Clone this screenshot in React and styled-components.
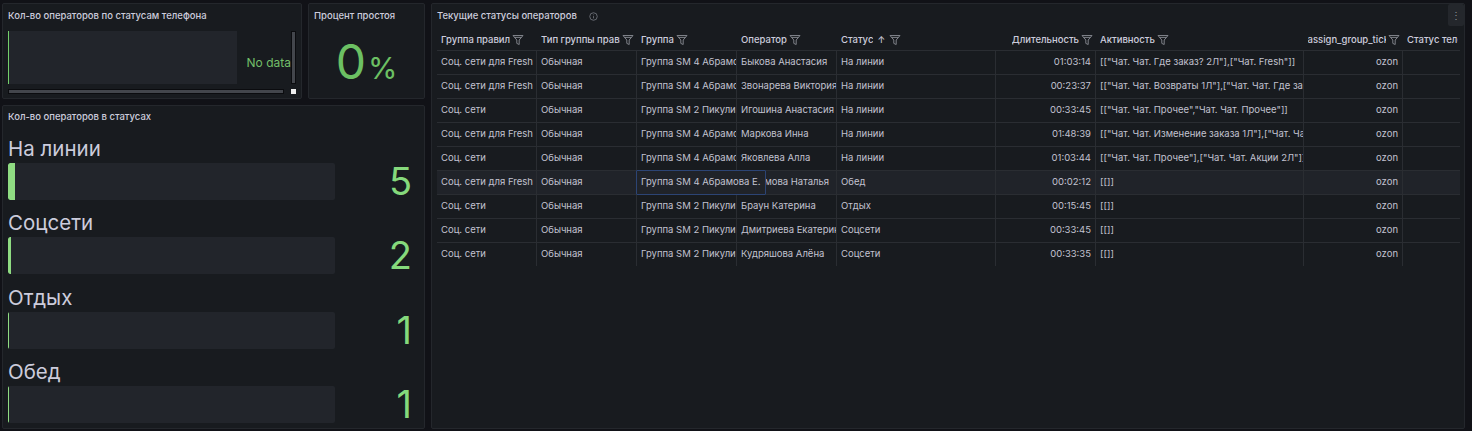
import styled, { createGlobalStyle } from 'styled-components'

const GlobalStyle = createGlobalStyle`
  html, body {
    margin: 0;
    height: 100%;
    background: #111217;
  }
  body {
    font-family: Inter, "Noto Sans", sans-serif;
    overflow: hidden;
  }
  * { box-sizing: border-box; }
`

const Page = styled.div`
  width: 1472px;
  height: 431px;
  padding: 3px 7px 2px 2px;
  display: flex;
  gap: 6px;
`

const LeftColumn = styled.div`
  width: 423px;
  display: flex;
  flex-direction: column;
  gap: 6px;
`

const TopRow = styled.div`
  height: 96px;
  display: flex;
  gap: 6px;
`

const Panel = styled.section`
  position: relative;
  flex: ${p => p.$flex || '1'};
  min-width: 0;
  min-height: 0;
  background: #181b1f;
  border: 1px solid #24272c;
  border-radius: 2px;
  overflow: hidden;
`

const Title = styled.h2`
  margin: 0;
  padding: ${p => p.$top || 6}px 5px 0;
  height: 24px;
  font-size: 9.5px;
  line-height: 12px;
  font-weight: 500;
  color: #ccccdc;
  white-space: nowrap;
`

const StatusBody = styled.div`
  display: grid;
  grid-template-columns: 276px 7px 5px;
  grid-template-rows: 53px 5px 5px;
  padding: 3px 0 0 5px;
`

const NoDataArea = styled.div`
  grid-column: 1 / 3;
  display: flex;
  align-items: center;
  justify-content: flex-end;
  padding: 9px 0 0 0;
  background: linear-gradient(to right, #73d06a 0, #73d06a 1px, #22252b 1px, #22252b 229px, #181b1f 229px);
  color: #73bf69;
  font-size: 12px;
`

const ScrollV = styled.div`
  grid-column: 3;
  grid-row: 1;
  width: 5px;
  background: #43464c;
  border: 1px solid #0b0c0f;
`

const ScrollH = styled.div`
  grid-column: 1;
  grid-row: 3;
  height: 5px;
  background: #43464c;
  border: 1px solid #0b0c0f;
`

const ScrollCorner = styled.div`
  grid-column: 3;
  grid-row: 3;
  background: #eeeeee;
`

const StatValue = styled.div`
  display: flex;
  align-items: baseline;
  justify-content: center;
  margin-top: 5px;
  color: #6cc063;
  font-size: 48px;
  line-height: 58px;
  font-weight: 400;
`

const StatUnit = styled.span`
  font-size: 30px;
  margin-left: 2px;
`

const GaugeList = styled.div`
  display: flex;
  flex-direction: column;
  padding: 5.5px 12px 0 5px;
`

const GaugeItem = styled.div`
  height: 74.5px;
`

const GaugeLabel = styled.div`
  height: 27px;
  font-size: 20.5px;
  line-height: 25px;
  color: #ccccdc;
`

const GaugeRow = styled.div`
  display: flex;
  align-items: center;
  justify-content: space-between;
  height: 37px;
`

const GaugeTrack = styled.div`
  width: 327px;
  height: 100%;
  background: #22252b;
  border-radius: 2px;
  overflow: hidden;
`

const GaugeFill = styled.div`
  height: 100%;
  background: #8fdc82;
  border-radius: 2px 0 0 2px;
`

const GaugeValue = styled.div`
  font-size: 38px;
  line-height: 37px;
  color: #85d97c;
`

const InfoIcon = styled.svg`
  position: absolute;
  top: 8px;
  left: 157px;
  width: 9px;
  height: 9px;
  color: #7e818a;
`

const MenuButton = styled.button`
  position: absolute;
  top: 0;
  right: 0;
  width: 16px;
  height: 22px;
  padding: 0;
  border: 0;
  border-radius: 2px;
  background: #24272c;
  color: #8e9099;
  font: 10px/20px Inter, sans-serif;
`

const Table = styled.div`
  position: relative;
  margin: 3px 4px 0 5px;
  height: 235px;
  overflow: hidden;
  font-size: 9.5px;
`

const HeadRow = styled.div`
  display: flex;
  height: 20px;
  padding-bottom: 2px;
  border-bottom: 1px solid #2a2d32;
`

const HeadCell = styled.div`
  flex: 0 0 ${p => p.$w}px;
  display: flex;
  align-items: center;
  justify-content: ${p => (p.$right ? 'flex-end' : 'flex-start')};
  padding: 0 3px 0 4px;
  overflow: hidden;
  font-weight: 500;
  color: #ccccdc;
  white-space: nowrap;
`

const HeadText = styled.span`
  overflow: hidden;
  flex: 0 1 auto;
`

const SortArrow = styled.span`
  flex: none;
  margin: 0 2px 0 4px;
  font-size: 9px;
  color: #ccccdc;
`

const FilterIcon = styled.svg`
  flex: none;
  width: 12px;
  height: 12px;
  margin-left: 2px;
  color: #7e8188;
`

const Row = styled.div`
  display: flex;
  height: 24px;
  border-bottom: ${p => (p.$end ? '0' : '1px solid #2a2d32')};
  background: ${p => (p.$hovered ? '#202329' : 'transparent')};
`

const Cell = styled.div`
  flex: 0 0 ${p => p.$w}px;
  padding: 0 ${p => (p.$right ? '4px' : '0')} 0 4px;
  line-height: 21px;
  color: #c2c2d0;
  text-align: ${p => (p.$right ? 'right' : 'left')};
  white-space: nowrap;
  overflow: hidden;
  border-right: ${p => (p.$last ? '0' : '1px solid #2a2d32')};
`

const HoverCell = styled.div`
  position: absolute;
  top: 139px;
  left: 199px;
  height: 25px;
  padding: 0 0 0 4px;
  width: 130px;
  line-height: 21px;
  color: #c2c2d0;
  white-space: nowrap;
  background: #202329;
  border: 1px solid #2c4474;
  border-radius: 1px;
`

const columns = [
  { name: 'Группа правил', w: 100 },
  { name: 'Тип группы правил', w: 100 },
  { name: 'Группа', w: 100 },
  { name: 'Оператор', w: 100 },
  { name: 'Статус', w: 159, sort: true },
  { name: 'Длительность', w: 100, right: true },
  { name: 'Активность', w: 207.5 },
  { name: 'assign_group_ticket', w: 99.5, right: true },
  { name: 'Статус телефона', w: 58, nofilter: true },
]

const SM4 = 'Группа SM 4 Абрамова Е.'
const SM2 = 'Группа SM 2 Пикулина А.'

const rows = [
  ['Соц. сети для Fresh', SM4, 'Быкова Анастасия', 'На линии', '01:03:14', '[["Чат. Чат. Где заказ? 2Л"],["Чат. Fresh"]]'],
  ['Соц. сети для Fresh', SM4, 'Звонарева Виктория', 'На линии', '00:23:37', '[["Чат. Чат. Возвраты 1Л"],["Чат. Чат. Где заказ? 2Л"]]'],
  ['Соц. сети', SM2, 'Игошина Анастасия', 'На линии', '00:33:45', '[["Чат. Чат. Прочее","Чат. Чат. Прочее"]]'],
  ['Соц. сети для Fresh', SM4, 'Маркова Инна', 'На линии', '01:48:39', '[["Чат. Чат. Изменение заказа 1Л"],["Чат. Чат. Прочее"]]'],
  ['Соц. сети', SM4, 'Яковлева Алла', 'На линии', '01:03:44', '[["Чат. Чат. Прочее"],["Чат. Чат. Акции 2Л"]]'],
  ['Соц. сети для Fresh', SM4, 'Абрамова Наталья', 'Обед', '00:02:12', '[[]]'],
  ['Соц. сети', SM2, 'Браун Катерина', 'Отдых', '00:15:45', '[[]]'],
  ['Соц. сети', SM2, 'Дмитриева Екатерина', 'Соцсети', '00:33:45', '[[]]'],
  ['Соц. сети', SM2, 'Кудряшова Алёна', 'Соцсети', '00:33:35', '[[]]'],
]

const gauges = [
  { label: 'На линии', value: 5, fill: 7 },
  { label: 'Соцсети', value: 2, fill: 3 },
  { label: 'Отдых', value: 1, fill: 1 },
  { label: 'Обед', value: 1, fill: 1 },
]

const Filter = () => (
  <FilterIcon viewBox="0 0 12 12" fill="none" stroke="currentColor" strokeWidth="1">
    <path d="M1 1.5h10L7.2 6v4.5L4.8 9.4V6z" />
    <path d="M2.4 3.4h7.2" />
  </FilterIcon>
)

const Gauge = ({ label, value, fill }) => (
  <GaugeItem>
    <GaugeLabel>{label}</GaugeLabel>
    <GaugeRow>
      <GaugeTrack>
        <GaugeFill style={{ width: fill }} />
      </GaugeTrack>
      <GaugeValue>{value}</GaugeValue>
    </GaugeRow>
  </GaugeItem>
)

const App = () => {
  return (
    <Page>
      <GlobalStyle />
      <LeftColumn>
        <TopRow>
          <Panel $flex="0 0 300px">
            <Title>Кол-во операторов по статусам телефона</Title>
            <StatusBody>
              <NoDataArea>No data</NoDataArea>
              <ScrollV />
              <ScrollH />
              <ScrollCorner />
            </StatusBody>
          </Panel>
          <Panel>
            <Title>Процент простоя</Title>
            <StatValue>0<StatUnit>%</StatUnit></StatValue>
          </Panel>
        </TopRow>
        <Panel>
          <Title $top={5}>Кол-во операторов в статусах</Title>
          <GaugeList>
            {gauges.map(g => <Gauge key={g.label} {...g} />)}
          </GaugeList>
        </Panel>
      </LeftColumn>

      <Panel>
        <Title>Текущие статусы операторов</Title>
        <InfoIcon viewBox="0 0 12 12" fill="none" stroke="currentColor" strokeWidth="1">
          <circle cx="6" cy="6" r="5" />
          <path d="M6 5.5v3M6 3.4v.9" />
        </InfoIcon>
        <MenuButton>⋮</MenuButton>
        <Table>
          <HeadRow>
            {columns.map(c => (
              <HeadCell key={c.name} $w={c.w} $right={c.right}>
                <HeadText>{c.name}</HeadText>
                {c.sort && <SortArrow>↑</SortArrow>}
                {!c.nofilter && <Filter />}
              </HeadCell>
            ))}
          </HeadRow>
          {rows.map((r, i) => (
            <Row key={r[2]} $hovered={i === 5} $end={i === rows.length - 1}>
              <Cell $w={100}>{r[0]}</Cell>
              <Cell $w={100}>Обычная</Cell>
              <Cell $w={100}>{r[1]}</Cell>
              <Cell $w={100}>{r[2]}</Cell>
              <Cell $w={159}>{r[3]}</Cell>
              <Cell $w={100} $right>{r[4]}</Cell>
              <Cell $w={207.5}>{r[5]}</Cell>
              <Cell $w={99.5} $right>ozon</Cell>
              <Cell $w={58} $last />
            </Row>
          ))}
          <HoverCell>{SM4}</HoverCell>
        </Table>
      </Panel>
    </Page>
  )
}

export default App
